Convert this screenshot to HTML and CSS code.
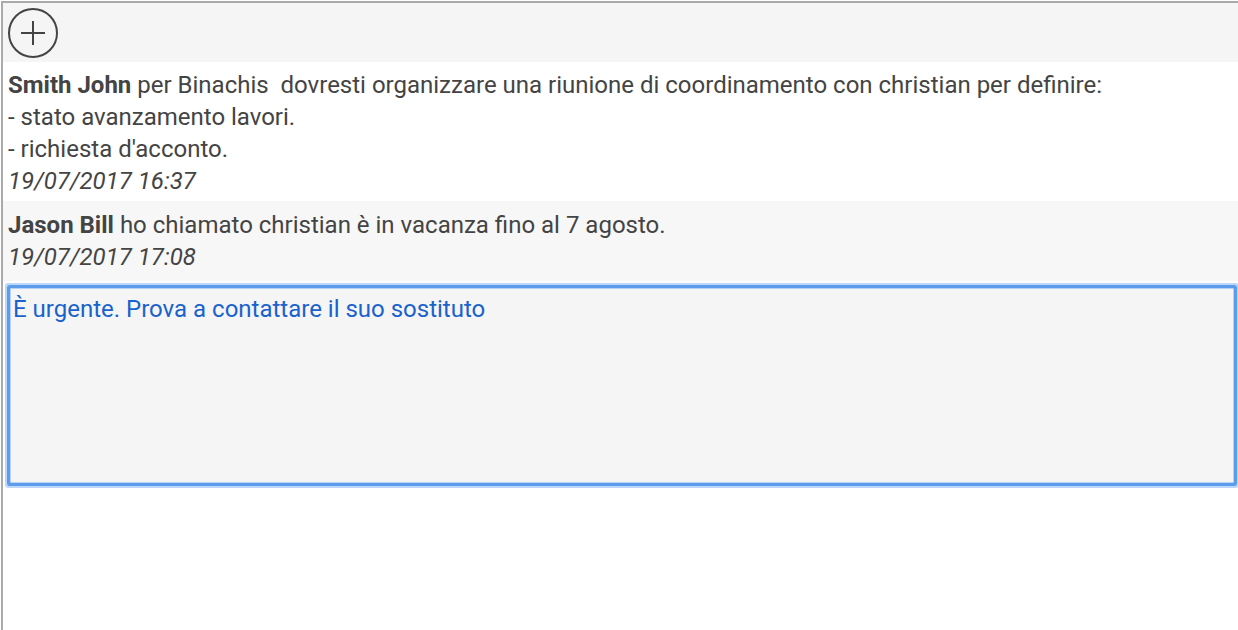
FILE: index.html
```html
<!DOCTYPE html>
<html lang="it">
<head>
<meta charset="utf-8">
<title>Commenti</title>
<link rel="stylesheet" href="styles.css">
</head>
<body>
<div class="frame">
  <div class="toolbar">
    <button class="add-btn" type="button" aria-label="Aggiungi">
      <svg width="52" height="52" viewBox="0 0 52 52">
        <circle cx="26" cy="26" r="24" fill="none" stroke="#444" stroke-width="2"/>
        <path d="M14 26H38M26 14V38" stroke="#444" stroke-width="2" fill="none"/>
      </svg>
    </button>
  </div>
  <div class="comment first">
    <div class="body"><b>Smith John</b> per Binachis&nbsp; dovresti organizzare una riunione di coordinamento con christian per definire:<br>- stato avanzamento lavori.<br>- richiesta d'acconto.</div>
    <div class="date">19/07/2017 16:37</div>
  </div>
  <div class="comment alt">
    <div class="body"><b>Jason Bill</b> ho chiamato christian è in vacanza fino al 7 agosto.</div>
    <div class="date">19/07/2017 17:08</div>
  </div>
  <div class="editor">
    <div class="input">È urgente. Prova a contattare il suo sostituto</div>
  </div>
</div>
</body>
</html>
```
FILE: styles.css
```css
html, body {
  margin: 0;
  padding: 0;
  background: #fff;
}
body {
  font-family: Roboto, "Liberation Sans", sans-serif;
  font-size: 24px;
  color: #444;
}
.frame {
  margin: 1px 0 0 1px;
  border-top: 2px solid #aaa;
  border-left: 2px solid #aaa;
  height: 640px;
  overflow: hidden;
}
.toolbar {
  background: #f5f5f5;
  height: 59px;
  display: flex;
  align-items: flex-start;
  padding: 4px 0 0 4px;
  box-sizing: border-box;
}
.add-btn {
  border: 0;
  background: none;
  padding: 0;
  margin: 0;
  width: 52px;
  height: 52px;
  display: block;
}
.add-btn svg { display: block; }
.comment {
  padding: 7px 0 4px 5px;
  line-height: 32px;
  background: #fff;
  white-space: nowrap;
}
.comment.alt {
  background: #f7f7f7;
  padding: 8px 0 8px 5px;
}
.body b { font-weight: 700; }
.date { font-style: italic; }
.editor {
  padding: 7px 4px 0 7px;
}
.input {
  box-sizing: border-box;
  height: 195px;
  background: #f5f5f5;
  border: 1px solid #b5d2f7;
  box-shadow: 0 0 0 3px #5c9ceb, 0 0 0 5px #bcd7f9;
  border-radius: 1px;
  padding: 6px 2px;
  color: #1a62cc;
  line-height: 28px;
}
```
